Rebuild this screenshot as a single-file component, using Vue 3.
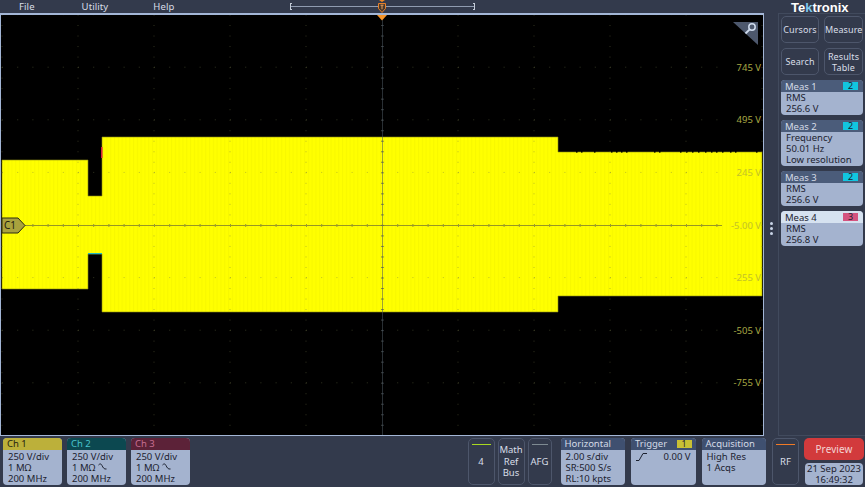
<template>
  <div class="scope">
    <header class="topbar">
      <nav class="menu">
        <span>File</span>
        <span>Utility</span>
        <span>Help</span>
      </nav>
      <div class="timeline">
        <span class="bracket"></span>
        <span class="bracket right"></span>
        <svg class="t-mark" width="10" height="13" viewBox="0 0 10 13">
          <path d="M2 0h6L5 2z" fill="#f08a24" />
          <path d="M1.5 3.5h7v5L5 12.5 1.5 8.500z" fill="#4a3a2c" stroke="#e8812a" />
          <path d="M3.500 5.200h3M5 5.200v4" stroke="#e8a060" fill="none" />
        </svg>
      </div>
    </header>

    <div class="main">
      <div class="plot">
        <svg class="screen" width="764" height="423" viewBox="0 13 764 423">
          <defs>
            <pattern id="stripes" width="3.800" height="10" patternUnits="userSpaceOnUse">
              <rect width="3.800" height="10" fill="#ffff00" />
              <rect width="1" height="10" fill="#f8f800" />
            </pattern>
          </defs>
          <rect x="0" y="13" width="764" height="423" fill="#000" />
          <path :d="wavePath" fill="url(#stripes)" stroke="#8c8c10" stroke-width="0.600" />
          <rect v-for="x in notches" :key="'n' + x" :x="x" y="150" width="1.500" height="2.600" fill="#000" />
          <rect x="101" y="147" width="1.500" height="11" fill="#d8263c" />
          <rect x="88" y="253" width="14" height="1.200" fill="#22b8c0" />

          <!-- grid -->
          <g v-for="x in gridX" :key="'x' + x">
            <rect
              v-for="y in minorY"
              :key="y"
              :x="x - 0.500"
              :y="y"
              width="1"
              height="1"
              fill="#6c7048"
              opacity="0.450"
            />
          </g>
          <g v-for="y in gridY" :key="'y' + y">
            <rect
              v-for="x in minorX"
              :key="x"
              :x="x"
              :y="y - 0.500"
              width="1"
              height="1"
              fill="#6c7048"
              opacity="0.450"
            />
          </g>
          <line x1="382.500" y1="20" x2="382.500" y2="435" stroke="#4c5660" opacity="0.550" />
          <line x1="24" y1="225.500" x2="722" y2="225.500" stroke="#85852a" opacity="0.850" />
          <g v-for="x in minorX" :key="'c' + x">
            <line :x1="x + 0.500" y1="224" :x2="x + 0.500" y2="227" stroke="#9a9a30" />
          </g>
          <g v-for="y in minorY" :key="'d' + y">
            <line x1="381" :y1="y + 0.500" x2="384" :y2="y + 0.500" stroke="#4c5660" opacity="0.600" />
          </g>

          <!-- scale labels -->
          <text
            v-for="label in scale"
            :key="label.text"
            x="761"
            :y="label.y"
            text-anchor="end"
            class="scale"
            :class="{ dim: label.dim }"
          >{{ label.text }}</text>

          <!-- trigger marker -->
          <path d="M377 15h10l-5 5.500z" fill="#f6952a" />

          <!-- zoom corner -->
          <path d="M733 22h25v23z" fill="#4d586d" />
          <circle cx="752" cy="27" r="3.200" fill="none" stroke="#d0dcee" stroke-width="1.500" />
          <line x1="749.700" y1="29.300" x2="745.500" y2="33.500" stroke="#d0dcee" stroke-width="1.800" />

          <!-- channel marker -->
          <path d="M2 218h16l7 7.500-7 7.500H2z" fill="#a9a23e" stroke="#2c2c10" />
          <text x="4" y="229" class="c1">C1</text>
        </svg>
      </div>

      <aside class="side">
        <span class="logo">Te<i>k</i>tronix</span>
        <span class="dots"><b></b><b></b><b></b></span>
        <div class="panel">
          <div class="buttons">
            <button>Cursors</button>
            <button>Measure</button>
            <button>Search</button>
            <button>Results<br />Table</button>
          </div>
          <div
            v-for="m in measures"
            :key="m.name"
            class="meas"
            :class="{ active: m.active }"
          >
            <div class="meas-head">
              <span>{{ m.name }}</span>
              <span class="badge" :class="{ pink: m.channel === 3 }">{{ m.channel }}</span>
            </div>
            <div class="meas-body">
              <p v-for="line in m.lines" :key="line">{{ line }}</p>
            </div>
          </div>
        </div>
      </aside>
    </div>

    <footer class="bottom">
      <div class="channels">
        <div v-for="c in channels" :key="c.name" class="card ch">
          <div class="head" :class="c.cls">{{ c.name }}</div>
          <div class="body">
            <p>250 V/div</p>
            <p>
              1 MΩ
              <svg v-if="c.filter" width="9" height="8" viewBox="0 0 9 8">
                <path d="M.5 2C2 .5 3 .5 4 2.500S6 6.500 8.500 6" fill="none" stroke="#1c2230" />
              </svg>
            </p>
            <p>200 MHz</p>
          </div>
        </div>
      </div>

      <div class="controls">
        <div class="ghost"><span class="bar green"></span>4</div>
        <div class="ghost stack">Math<br />Ref<br />Bus</div>
        <div class="ghost afg"><span class="bar grey"></span>AFG</div>
        <div class="card wide">
          <div class="head slate">Horizontal</div>
          <div class="body">
            <p>2.00 s/div</p>
            <p>SR:500 S/s</p>
            <p>RL:10 kpts</p>
          </div>
        </div>
        <div class="card wide">
          <div class="head slate">Trigger <span class="badge yellow">1</span></div>
          <div class="body trig-body">
            <svg width="11" height="8" viewBox="0 0 11 8">
              <path d="M0 7.500h3l4-7h4" fill="none" stroke="#1c2230" />
            </svg>
            <span>0.00 V</span>
          </div>
        </div>
        <div class="card wide">
          <div class="head slate">Acquisition</div>
          <div class="body">
            <p>High Res</p>
            <p>1 Acqs</p>
          </div>
        </div>
        <div class="ghost rf"><span class="bar orange"></span>RF</div>
        <div class="clock">
          <button class="preview">Preview</button>
          <div class="date">21 Sep 2023<br />16:49:32</div>
        </div>
      </div>
    </footer>
  </div>
</template>

<script setup>
  const range = (start, step, count) =>
    Array.from({ length: count }, (_, i) => start + step * i);

  const wavePath =
    'M2 160H88V196H102V137H558V152H762V296H558V312H102V254H88V289H2Z';

  // small teeth along the top of the last segment
  const notches = [576, 581, 594, 611, 616, 621, 626, 654, 659, 680, 686, 692, 698, 705, 711, 716, 722, 730, 735, 756];

  const gridX = range(2, 76, 11);
  const gridY = range(14.6, 52.6, 8);
  const minorX = range(2, 15.2, 49).filter((x) => x < 722);
  const minorY = range(14.5, 10.52, 41);

  const scale = [
    { text: '745 V', y: 71 },
    { text: '495 V', y: 123 },
    { text: '245 V', y: 176, dim: true },
    { text: '-5.00 V', y: 229, dim: true },
    { text: '-255 V', y: 281, dim: true },
    { text: '-505 V', y: 334 },
    { text: '-755 V', y: 386 }
  ];

  const measures = [
    { name: 'Meas 1', channel: 2, lines: ['RMS', '256.6 V'] },
    { name: 'Meas 2', channel: 2, lines: ['Frequency', '50.01 Hz', 'Low resolution'] },
    { name: 'Meas 3', channel: 2, lines: ['RMS', '256.6 V'] },
    { name: 'Meas 4', channel: 3, lines: ['RMS', '256.8 V'], active: true }
  ];

  const channels = [
    { name: 'Ch 1', cls: 'yellow-head' },
    { name: 'Ch 2', cls: 'teal-head', filter: true },
    { name: 'Ch 3', cls: 'wine-head', filter: true }
  ];
</script>

<style>
  html,
  body {
    margin: 0;
    background: #333a4c;
  }
</style>

<style scoped>
  .scope {
    width: 865px;
    height: 487px;
    overflow: hidden;
    display: flex;
    flex-direction: column;
    background: #333a4c;
    color: #d9dee8;
    font-family: "Noto Sans", "Open Sans", sans-serif;
    font-size: 9.5px;
    line-height: 11px;
  }
  p {
    margin: 0;
  }

  .topbar {
    height: 13px;
    display: flex;
    flex: none;
  }
  .menu {
    width: 290px;
    display: flex;
    padding-left: 19px;
    box-sizing: border-box;
    line-height: 13px;
    letter-spacing: 0.1px;
  }
  .menu span:nth-child(2) {
    margin-left: 47px;
  }
  .menu span:nth-child(3) {
    margin-left: 45px;
  }
  .timeline {
    position: relative;
    width: 185px;
    height: 13px;
  }
  .timeline::before {
    content: '';
    position: absolute;
    left: 1px;
    right: 1px;
    top: 6px;
    height: 1px;
    background: #8f9bb0;
  }
  .bracket {
    position: absolute;
    left: 0;
    top: 3px;
    width: 2px;
    height: 7px;
    border: 1px solid #c4ccd8;
    border-right: 0;
    box-sizing: border-box;
  }
  .bracket.right {
    left: auto;
    right: 0;
    border-right: 1px solid #c4ccd8;
    border-left: 0;
  }
  .t-mark {
    position: absolute;
    left: 87px;
    top: 0;
  }

  .main {
    display: flex;
    height: 423px;
    flex: none;
  }
  .plot {
    width: 764px;
    flex: none;
    box-sizing: border-box;
    border: 2px solid #a3b6d6;
    border-right-width: 1px;
    border-bottom-width: 1px;
    border-left-width: 1px;
    overflow: hidden;
  }
  .screen {
    display: block;
    margin: -2px 0 0 -1px;
  }
  .scale {
    font-size: 9.500px;
    fill: #a8a844;
  }
  .scale.dim {
    fill: #c2c228;
  }
  .c1 {
    font-size: 10px;
    fill: #1c1c10;
  }

  .side {
    position: relative;
    flex: 1;
    padding-left: 14px;
  }
  .logo {
    position: absolute;
    top: -13px;
    left: 27px;
    font-family: "Liberation Sans", sans-serif;
    font-size: 13px;
    line-height: 15px;
    font-weight: 700;
    color: #fff;
  }
  .logo i {
    font-style: normal;
    color: #7fc8ee;
  }
  .dots {
    position: absolute;
    left: 6px;
    top: 209px;
    display: flex;
    flex-direction: column;
    gap: 2px;
  }
  .dots b {
    width: 3px;
    height: 3px;
    border-radius: 50%;
    background: #c9d4e6;
  }
  .panel {
    height: 100%;
    box-sizing: border-box;
    border: 1px solid #414a5d;
    border-right: 0;
    padding: 2px 0 0 2px;
    display: flex;
    flex-direction: column;
    gap: 5px;
  }
  .buttons {
    display: grid;
    grid-template-columns: 38px 39px;
    grid-auto-rows: 27px;
    gap: 5px;
  }
  button {
    padding: 0;
    font: inherit;
    font-size: 9px;
    letter-spacing: 0.1px;
    color: #d9dee8;
    background: #333a4c;
    border: 1px solid #4d566b;
    border-radius: 5px;
  }
  .meas {
    width: 82px;
    border-radius: 4px;
    overflow: hidden;
    background: #a4b3cf;
    color: #1c2230;
  }
  .meas-head {
    height: 12px;
    display: flex;
    justify-content: space-between;
    align-items: center;
    padding: 0 5px 0 4px;
    background: #4b5c7a;
    color: #d5dbe6;
  }
  .active .meas-head {
    background: #d6e2f0;
    color: #1c2230;
  }
  .meas-body {
    padding: 0 5px 1px;
  }
  .badge {
    width: 15px;
    height: 8px;
    line-height: 8px;
    text-align: center;
    background: #12c6e0;
    color: #1c2230;
    font-size: 9px;
  }
  .badge.pink {
    background: #d4537f;
  }
  .badge.yellow {
    background: #c8c034;
  }

  .bottom {
    flex: 1;
    display: flex;
    justify-content: space-between;
    padding: 2px 1px 0 3px;
    box-sizing: border-box;
  }
  .channels,
  .controls {
    display: flex;
    gap: 5px;
  }
  .controls {
    gap: 3px;
  }
  .card {
    height: 47px;
    border-radius: 4px;
    overflow: hidden;
    background: #a4b3cf;
    color: #1c2230;
    display: flex;
    flex-direction: column;
  }
  .ch {
    width: 59px;
  }
  .head {
    height: 12px;
    padding: 0 4px;
    line-height: 12px;
    flex: none;
    display: flex;
    justify-content: space-between;
    align-items: center;
  }
  .yellow-head {
    background: #bcb03a;
    color: #24240f;
  }
  .teal-head {
    background: #0c4850;
    color: #49c4cc;
  }
  .wine-head {
    background: #5c2238;
    color: #c76f91;
  }
  .slate {
    background: #3f5070;
    color: #d5dbe6;
  }
  .body {
    padding: 1px 5px 0;
  }
  .body p {
    height: 11px;
  }
  .ghost {
    position: relative;
    width: 27px;
    height: 47px;
    box-sizing: border-box;
    border: 1px solid #4d566b;
    border-radius: 5px;
    display: flex;
    align-items: center;
    justify-content: center;
    text-align: center;
  }
  .afg {
    width: 24px;
    margin-right: 6px;
  }
  .rf {
    margin-right: 2px;
  }
  .stack {
    line-height: 11.500px;
  }
  .bar {
    position: absolute;
    top: 5px;
    left: 3px;
    right: 3px;
    height: 1px;
    background: #8fa0b8;
  }
  .bar.green {
    background: #a8d820;
  }
  .bar.grey {
    background: #7e8a92;
  }
  .bar.orange {
    background: #f07a26;
  }
  .wide {
    width: 64.500px;
    margin-right: 3px;
  }
  .trig-body {
    display: flex;
    justify-content: space-between;
    align-items: center;
    padding: 1px 5px 0 5px;
  }
  .clock {
    width: 60px;
    display: flex;
    flex-direction: column;
    gap: 3px;
  }
  .preview {
    height: 22px;
    background: #d23a3c;
    border: 0;
    color: #f2d4d4;
    font-size: 10px;
  }
  .date {
    height: 22px;
    margin: 0 1px;
    border-radius: 4px;
    background: #a4b3cf;
    color: #1c2230;
    text-align: center;
    line-height: 11px;
  }
</style>
